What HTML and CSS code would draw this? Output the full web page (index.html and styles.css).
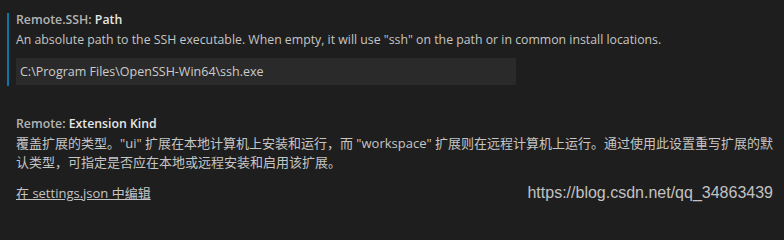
FILE: index.html
```html
<!DOCTYPE html>
<html lang="zh">
<head>
<meta charset="utf-8">
<link rel="stylesheet" href="styles.css">
</head>
<body>
<div class="page">
  <div class="setting focused">
    <div class="title"><span class="category">Remote.SSH: </span><span class="label">Path</span></div>
    <div class="desc">An absolute path to the SSH executable. When empty, it will use "ssh" on the path or in common install locations.</div>
    <div class="input">C:\Program Files\OpenSSH-Win64\ssh.exe</div>
  </div>
  <div class="setting second">
    <div class="title"><span class="category">Remote: </span><span class="label">Extension Kind</span></div>
    <div class="desc cjk">覆盖扩展的类型。"ui" 扩展在本地计算机上安装和运行，而 "workspace" 扩展则在远程计算机上运行。通过使用此设置重写扩展的默认类型，可指定是否应在本地或远程安装和启用该扩展。</div>
    <a class="edit-link">在 settings.json 中编辑</a>
  </div>
  <div class="watermark">https://blog.csdn.net/qq_34863439</div>
</div>
</body>
</html>
```
FILE: styles.css
```css
html, body {
  margin: 0;
  padding: 0;
  background: #1e1e1e;
}
.page {
  position: relative;
  width: 784px;
  height: 212px;
  overflow: hidden;
  font-family: "Open Sans", "Noto Sans CJK SC", sans-serif;
  font-size: 12px;
  color: #c5c5c5;
}
.setting {
  margin-left: 7px;
  padding-left: 7px;
  border-left: 2px solid transparent;
  width: 760px;
}
.focused {
  margin-top: 13px;
  border-left-color: #0f74a6;
  padding-bottom: 1px;
}
.second {
  margin-top: 31px;
}
.title {
  line-height: 14px;
  font-weight: 600;
  font-size: 12.3px;
}
.category {
  color: #b4b4b4;
}
.label {
  color: #e6e6e6;
}
.desc {
  margin-top: 4px;
  line-height: 18px;
  font-size: 12.3px;
}
.cjk {
  font-size: 13px;
  line-height: 19px;
  margin-top: 3px;
}
.input {
  margin-top: 9px;
  width: 496px;
  height: 27px;
  line-height: 27px;
  padding-left: 4px;
  background: #2a2a2a;
  color: #cccccc;
  font-size: 12.5px;
}
.edit-link {
  display: inline-block;
  margin-top: 11px;
  font-size: 13px;
  color: #c5c5c5;
  text-decoration: underline;
}
.watermark {
  position: absolute;
  right: 11px;
  bottom: 10px;
  font-family: "Liberation Sans", Arial, sans-serif;
  font-size: 16px;
  color: #c2c2c2;
}
```
